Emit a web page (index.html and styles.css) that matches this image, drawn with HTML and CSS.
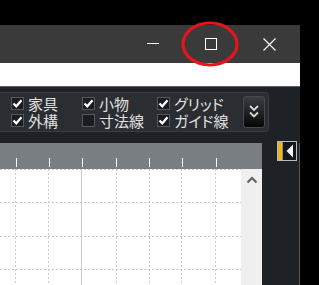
FILE: index.html
```html
<!DOCTYPE html>
<html lang="ja">
<head>
<meta charset="utf-8">
<link rel="stylesheet" href="styles.css">
</head>
<body>
<div class="screen">
  <div class="top-gap"></div>
  <div class="window">
    <div class="titlebar">
      <div class="cap-btn">
        <svg width="12" height="12" viewBox="0 0 12 12"><rect x="0" y="5" width="12" height="1" fill="#fff"/></svg>
      </div>
      <div class="cap-btn">
        <svg width="12" height="12" viewBox="0 0 12 12"><rect x="0.5" y="0.5" width="11" height="11" fill="none" stroke="#fff" stroke-width="1"/></svg>
      </div>
      <div class="cap-btn">
        <svg width="13" height="13" viewBox="0 0 13 13"><path d="M0.5 0.5 L12.5 12.5 M12.5 0.5 L0.5 12.5" stroke="#fff" stroke-width="1.1" fill="none"/></svg>
      </div>
    </div>
    <div class="addressbar"></div>
    <div class="toolbar">
      <div class="panel">
        <div class="checks">
          <label class="chk"><span class="box on"><svg width="11" height="11" viewBox="0 0 11 11"><path d="M1.5 5.5 L4.3 8.3 L9.5 2.2" stroke="#fff" stroke-width="2.2" fill="none"/></svg></span><span class="lbl">家具</span></label>
          <label class="chk"><span class="box on"><svg width="11" height="11" viewBox="0 0 11 11"><path d="M1.5 5.5 L4.3 8.3 L9.5 2.2" stroke="#fff" stroke-width="2.2" fill="none"/></svg></span><span class="lbl">小物</span></label>
          <label class="chk"><span class="box on"><svg width="11" height="11" viewBox="0 0 11 11"><path d="M1.5 5.5 L4.3 8.3 L9.5 2.2" stroke="#fff" stroke-width="2.2" fill="none"/></svg></span><span class="lbl">グリッド</span></label>
          <label class="chk"><span class="box on"><svg width="11" height="11" viewBox="0 0 11 11"><path d="M1.5 5.5 L4.3 8.3 L9.5 2.2" stroke="#fff" stroke-width="2.2" fill="none"/></svg></span><span class="lbl">外構</span></label>
          <label class="chk"><span class="box"></span><span class="lbl">寸法線</span></label>
          <label class="chk"><span class="box on"><svg width="11" height="11" viewBox="0 0 11 11"><path d="M1.5 5.5 L4.3 8.3 L9.5 2.2" stroke="#fff" stroke-width="2.2" fill="none"/></svg></span><span class="lbl">ガイド線</span></label>
        </div>
        <div class="expand">
          <svg width="10" height="14" viewBox="0 0 10 14"><path d="M1 1 L5 5 L9 1 M1 7.5 L5 11.5 L9 7.5" stroke="#d8d8d8" stroke-width="1.8" fill="none"/></svg>
        </div>
      </div>
    </div>
    <div class="main">
      <div class="canvas-col">
        <div class="ruler">
          <svg width="262" height="26" viewBox="0 0 262 26">
            <g fill="#fff">
              <rect x="16" y="15" width="1" height="9"/>
              <rect x="49" y="15" width="1" height="9"/>
              <rect x="82" y="15" width="1" height="9"/>
              <rect x="116" y="15" width="1" height="9"/>
              <rect x="149" y="15" width="1" height="9"/>
              <rect x="182" y="15" width="1" height="9"/>
              <rect x="216" y="15" width="1" height="9"/>
            </g>
          </svg>
        </div>
        <div class="work">
          <svg class="grid" width="241" height="116" viewBox="0 0 241 116">
            <g stroke="#cacaca" stroke-width="1" stroke-dasharray="2 2" fill="none">
              <line x1="0" y1="0.5" x2="241" y2="0.5"/>
              <line x1="0" y1="33.5" x2="241" y2="33.5"/>
              <line x1="0" y1="67.5" x2="241" y2="67.5"/>
              <line x1="0" y1="100.5" x2="241" y2="100.5"/>
              <line x1="15.5" y1="0" x2="15.5" y2="116"/>
              <line x1="48.5" y1="0" x2="48.5" y2="116"/>
              <line x1="116.5" y1="0" x2="116.5" y2="116"/>
              <line x1="149.5" y1="0" x2="149.5" y2="116"/>
              <line x1="181.5" y1="0" x2="181.5" y2="116"/>
              <line x1="215.5" y1="0" x2="215.5" y2="116"/>
            </g>
            <line x1="81.5" y1="0" x2="81.5" y2="116" stroke="#cccccc" stroke-width="1"/>
          </svg>
          <div class="scrollbar">
            <svg width="12" height="9" viewBox="0 0 12 9"><path d="M1.5 7.5 L6 3 L10.5 7.5" stroke="#5e5e5e" stroke-width="2" fill="none"/></svg>
          </div>
        </div>
      </div>
      <div class="side">
        <div class="collapse">
          <span class="stripe"></span>
          <span class="arrow">
            <svg width="8" height="14" viewBox="0 0 8 14"><path d="M7 0.5 L7 13.5 L0.5 7 Z" fill="#f2f4f6"/></svg>
          </span>
        </div>
      </div>
    </div>
  </div>
  <svg class="mark" width="62" height="50" viewBox="0 0 62 50"><ellipse cx="31" cy="25" rx="27" ry="21" fill="none" stroke="#e8141c" stroke-width="3.2"/></svg>
</div>
</body>
</html>
```

FILE: styles.css
```css
* { box-sizing: border-box; }
html, body { margin: 0; padding: 0; background: #000; }
body { font-family: "Noto Sans CJK JP", "Noto Sans", sans-serif; }

.screen {
  position: relative;
  width: 319px;
  height: 285px;
  overflow: hidden;
  background: #000;
}
.top-gap { height: 25px; }

.window {
  width: 300px;
  overflow: hidden;
}

.titlebar {
  height: 38px;
  background: #3a3a3a;
  display: flex;
  justify-content: flex-end;
  padding-right: 2px;
}
.cap-btn {
  width: 58px;
  height: 38px;
  display: flex;
  align-items: center;
  justify-content: center;
}
.cap-btn svg { display: block; }

.addressbar {
  height: 23px;
  background: #fff;
}

.toolbar {
  height: 57px;
  background: #1e2125;
  border-top: 1px solid #5b5e62;
  padding-top: 5px;
}
.panel {
  margin-left: -6px;
  width: 275px;
  height: 40px;
  background: #2a2d31;
  border: 1px solid #393d41;
  border-radius: 4px;
  display: flex;
  align-items: center;
  padding-left: 16px;
  padding-right: 3px;
}
.checks {
  display: grid;
  grid-template-columns: 71px 75px 80px;
  grid-auto-rows: 17px;
}
.chk {
  display: flex;
  align-items: center;
  gap: 4px;
  color: #e2e2e2;
  font-size: 15px;
  line-height: 17px;
  white-space: nowrap;
  height: 17px;
}
.lbl {
  font-feature-settings: "palt" 1;
}
.box {
  width: 13px;
  height: 13px;
  border: 1px solid #55595d;
  background: #1a1c1f;
  display: flex;
  align-items: center;
  justify-content: center;
  flex: none;
}
.box svg { display: block; }

.expand {
  margin-left: auto;
  width: 22px;
  height: 32px;
  border: 1px solid #45494d;
  border-radius: 3px;
  background: linear-gradient(#3a3d41, #202225 50%, #050505);
  display: flex;
  align-items: center;
  justify-content: center;
}
.expand svg { display: block; }

.main {
  display: flex;
  height: 142px;
}
.canvas-col {
  width: 262px;
  display: flex;
  flex-direction: column;
}
.ruler {
  height: 26px;
  background: #797e82;
}
.ruler svg { display: block; }
.work {
  display: flex;
  flex: 1;
  background: #fff;
}
.grid { display: block; flex: none; }
.scrollbar {
  width: 21px;
  background: #efefef;
  display: flex;
  justify-content: center;
  padding-top: 6px;
}
.scrollbar svg { display: block; }

.side {
  width: 38px;
  background: #1e2125;
  border-right: 1px solid #55585b;
}
.collapse {
  margin-top: -2px;
  margin-left: 15px;
  width: 20px;
  height: 20px;
  border: 1px solid #b9bdc1;
  background: #15171a;
  display: flex;
}
.stripe {
  width: 5px;
  background: #f0b422;
  border-right: 1px solid #8a8e92;
}
.arrow {
  flex: 1;
  display: flex;
  align-items: center;
  justify-content: center;
  padding-left: 1px;
}
.arrow svg { display: block; }

.mark {
  position: absolute;
  left: 179px;
  top: 19px;
}
```
